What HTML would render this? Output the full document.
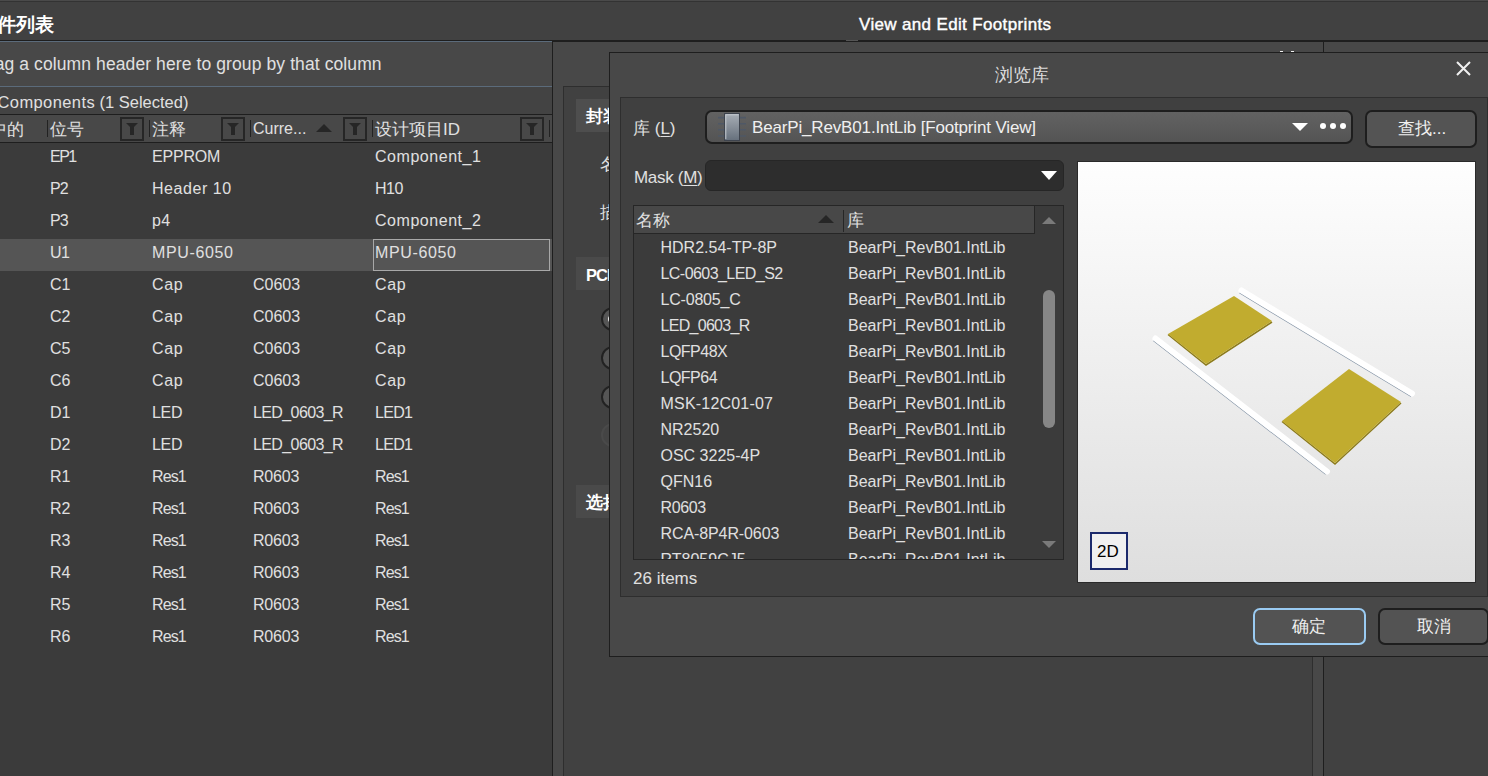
<!DOCTYPE html>
<html><head><meta charset="utf-8"><style>
html,body{margin:0;padding:0;width:1488px;height:776px;overflow:hidden;background:#414141;font-family:"Liberation Sans", sans-serif;position:relative}
u{text-decoration:underline;text-underline-offset:2px}
</style></head><body>
<div style="position:absolute;left:0px;top:0px;width:1488px;height:1px;background:#4a4a4a"></div>
<div style="position:absolute;left:0px;top:1px;width:1488px;height:1px;background:#333333"></div>
<div style="position:absolute;left:0px;top:2px;width:1488px;height:38px;background:#414141"></div>
<div style="position:absolute;left:0px;top:40px;width:1488px;height:1px;background:#1e1e1e"></div>
<div style="position:absolute;left:-3px;top:14.92px;font-size:19px;line-height:19px;color:#ffffff;font-weight:bold;white-space:pre;">件列表</div>
<div style="position:absolute;left:859px;top:15.61px;font-size:17px;line-height:17px;color:#ffffff;font-weight:normal;white-space:pre;letter-spacing:0.35px;-webkit-text-stroke:0.4px #fff">View and Edit Footprints</div>
<div style="position:absolute;left:0px;top:41px;width:552px;height:1px;background:#5b6b7b"></div>
<div style="position:absolute;left:0px;top:42px;width:552px;height:44px;background:#484848"></div>
<div style="position:absolute;left:0px;top:86px;width:552px;height:1px;background:#5b6b7b"></div>
<div style="position:absolute;left:0px;top:87px;width:552px;height:27px;background:#434343"></div>
<div style="position:absolute;left:0px;top:114px;width:552px;height:1px;background:#1e1e1e"></div>
<div style="position:absolute;left:0px;top:115px;width:552px;height:27px;background:#484848"></div>
<div style="position:absolute;left:0px;top:142px;width:552px;height:1px;background:#1e1e1e"></div>
<div style="position:absolute;left:0px;top:143px;width:552px;height:633px;background:#3b3b3b"></div>
<div style="position:absolute;left:552px;top:41px;width:1px;height:735px;background:#1e1e1e"></div>
<div style="position:absolute;left:-24px;top:56.19px;font-size:17.5px;line-height:17.5px;color:#e0e0e0;font-weight:normal;white-space:pre;letter-spacing:0.1px;">Drag a column header here to group by that column</div>
<div style="position:absolute;left:-2.5px;top:94.03px;font-size:16.5px;line-height:16.5px;color:#e0e0e0;font-weight:normal;white-space:pre;letter-spacing:0.4px;">Components</div>
<div style="position:absolute;left:99.5px;top:94.03px;font-size:16.5px;line-height:16.5px;color:#e0e0e0;font-weight:normal;white-space:pre;">(1 Selected)</div>
<div style="position:absolute;left:-10px;top:120.61px;font-size:17px;line-height:17px;color:#e0e0e0;font-weight:normal;white-space:pre;">中的</div>
<div style="position:absolute;left:47px;top:120px;width:1px;height:17px;background:#222"></div>
<div style="position:absolute;left:149px;top:120px;width:1px;height:17px;background:#222"></div>
<div style="position:absolute;left:250px;top:120px;width:1px;height:17px;background:#222"></div>
<div style="position:absolute;left:372px;top:120px;width:1px;height:17px;background:#222"></div>
<div style="position:absolute;left:549px;top:120px;width:1px;height:17px;background:#222"></div>
<div style="position:absolute;left:50px;top:120.61px;font-size:17px;line-height:17px;color:#e0e0e0;font-weight:normal;white-space:pre;">位号</div>
<div style="position:absolute;left:152px;top:120.61px;font-size:17px;line-height:17px;color:#e0e0e0;font-weight:normal;white-space:pre;">注释</div>
<div style="position:absolute;left:253px;top:121.46px;font-size:16px;line-height:16px;color:#e0e0e0;font-weight:normal;white-space:pre;">Curre...</div>
<div style="position:absolute;left:375px;top:120.61px;font-size:17px;line-height:17px;color:#e0e0e0;font-weight:normal;white-space:pre;">设计项目ID</div>
<div style="position:absolute;left:120px;top:117px;width:20px;height:20px;border:2px solid #262626;background:#484848"></div>
<svg style="position:absolute;left:120px;top:117px" width="24" height="24"><path d="M6 6 H18 L14 10 V18 H10 V10 Z" fill="#262626"/></svg>
<div style="position:absolute;left:221px;top:117px;width:20px;height:20px;border:2px solid #262626;background:#484848"></div>
<svg style="position:absolute;left:221px;top:117px" width="24" height="24"><path d="M6 6 H18 L14 10 V18 H10 V10 Z" fill="#262626"/></svg>
<div style="position:absolute;left:343px;top:117px;width:20px;height:20px;border:2px solid #262626;background:#484848"></div>
<svg style="position:absolute;left:343px;top:117px" width="24" height="24"><path d="M6 6 H18 L14 10 V18 H10 V10 Z" fill="#262626"/></svg>
<div style="position:absolute;left:520px;top:117px;width:20px;height:20px;border:2px solid #262626;background:#484848"></div>
<svg style="position:absolute;left:520px;top:117px" width="24" height="24"><path d="M6 6 H18 L14 10 V18 H10 V10 Z" fill="#262626"/></svg>
<svg style="position:absolute;left:316px;top:124px" width="16" height="8"><path d="M0 8 L8 0 L16 8 Z" fill="#262626"/></svg>
<div style="position:absolute;left:50px;top:149.46px;font-size:16px;line-height:16px;color:#e0e0e0;font-weight:normal;white-space:pre;letter-spacing:-1.5px;">EP1</div>
<div style="position:absolute;left:152px;top:149.46px;font-size:16px;line-height:16px;color:#e0e0e0;font-weight:normal;white-space:pre;letter-spacing:-0.2px;">EPPROM</div>
<div style="position:absolute;left:375px;top:149.46px;font-size:16px;line-height:16px;color:#e0e0e0;font-weight:normal;white-space:pre;letter-spacing:0.54px;">Component_1</div>
<div style="position:absolute;left:50px;top:181.46px;font-size:16px;line-height:16px;color:#e0e0e0;font-weight:normal;white-space:pre;letter-spacing:-1px;">P2</div>
<div style="position:absolute;left:152px;top:181.46px;font-size:16px;line-height:16px;color:#e0e0e0;font-weight:normal;white-space:pre;letter-spacing:0.56px;">Header 10</div>
<div style="position:absolute;left:375px;top:181.46px;font-size:16px;line-height:16px;color:#e0e0e0;font-weight:normal;white-space:pre;letter-spacing:-0.5px;">H10</div>
<div style="position:absolute;left:50px;top:213.46px;font-size:16px;line-height:16px;color:#e0e0e0;font-weight:normal;white-space:pre;letter-spacing:-1px;">P3</div>
<div style="position:absolute;left:152px;top:213.46px;font-size:16px;line-height:16px;color:#e0e0e0;font-weight:normal;white-space:pre;letter-spacing:0.3px;">p4</div>
<div style="position:absolute;left:375px;top:213.46px;font-size:16px;line-height:16px;color:#e0e0e0;font-weight:normal;white-space:pre;letter-spacing:0.54px;">Component_2</div>
<div style="position:absolute;left:0px;top:239px;width:552px;height:32px;background:#555555"></div>
<div style="position:absolute;left:373px;top:239px;width:175px;height:30px;border:1px solid #a8a8a8"></div>
<div style="position:absolute;left:50px;top:245.46px;font-size:16px;line-height:16px;color:#e0e0e0;font-weight:normal;white-space:pre;letter-spacing:-0.5px;">U1</div>
<div style="position:absolute;left:152px;top:245.46px;font-size:16px;line-height:16px;color:#e0e0e0;font-weight:normal;white-space:pre;letter-spacing:0.63px;">MPU-6050</div>
<div style="position:absolute;left:375px;top:245.46px;font-size:16px;line-height:16px;color:#e0e0e0;font-weight:normal;white-space:pre;letter-spacing:0.63px;">MPU-6050</div>
<div style="position:absolute;left:50px;top:277.46px;font-size:16px;line-height:16px;color:#e0e0e0;font-weight:normal;white-space:pre;">C1</div>
<div style="position:absolute;left:152px;top:277.46px;font-size:16px;line-height:16px;color:#e0e0e0;font-weight:normal;white-space:pre;letter-spacing:0.7px;">Cap</div>
<div style="position:absolute;left:253px;top:277.46px;font-size:16px;line-height:16px;color:#e0e0e0;font-weight:normal;white-space:pre;">C0603</div>
<div style="position:absolute;left:375px;top:277.46px;font-size:16px;line-height:16px;color:#e0e0e0;font-weight:normal;white-space:pre;letter-spacing:0.7px;">Cap</div>
<div style="position:absolute;left:50px;top:309.46px;font-size:16px;line-height:16px;color:#e0e0e0;font-weight:normal;white-space:pre;">C2</div>
<div style="position:absolute;left:152px;top:309.46px;font-size:16px;line-height:16px;color:#e0e0e0;font-weight:normal;white-space:pre;letter-spacing:0.7px;">Cap</div>
<div style="position:absolute;left:253px;top:309.46px;font-size:16px;line-height:16px;color:#e0e0e0;font-weight:normal;white-space:pre;">C0603</div>
<div style="position:absolute;left:375px;top:309.46px;font-size:16px;line-height:16px;color:#e0e0e0;font-weight:normal;white-space:pre;letter-spacing:0.7px;">Cap</div>
<div style="position:absolute;left:50px;top:341.46px;font-size:16px;line-height:16px;color:#e0e0e0;font-weight:normal;white-space:pre;">C5</div>
<div style="position:absolute;left:152px;top:341.46px;font-size:16px;line-height:16px;color:#e0e0e0;font-weight:normal;white-space:pre;letter-spacing:0.7px;">Cap</div>
<div style="position:absolute;left:253px;top:341.46px;font-size:16px;line-height:16px;color:#e0e0e0;font-weight:normal;white-space:pre;">C0603</div>
<div style="position:absolute;left:375px;top:341.46px;font-size:16px;line-height:16px;color:#e0e0e0;font-weight:normal;white-space:pre;letter-spacing:0.7px;">Cap</div>
<div style="position:absolute;left:50px;top:373.46px;font-size:16px;line-height:16px;color:#e0e0e0;font-weight:normal;white-space:pre;">C6</div>
<div style="position:absolute;left:152px;top:373.46px;font-size:16px;line-height:16px;color:#e0e0e0;font-weight:normal;white-space:pre;letter-spacing:0.7px;">Cap</div>
<div style="position:absolute;left:253px;top:373.46px;font-size:16px;line-height:16px;color:#e0e0e0;font-weight:normal;white-space:pre;">C0603</div>
<div style="position:absolute;left:375px;top:373.46px;font-size:16px;line-height:16px;color:#e0e0e0;font-weight:normal;white-space:pre;letter-spacing:0.7px;">Cap</div>
<div style="position:absolute;left:50px;top:405.46px;font-size:16px;line-height:16px;color:#e0e0e0;font-weight:normal;white-space:pre;">D1</div>
<div style="position:absolute;left:152px;top:405.46px;font-size:16px;line-height:16px;color:#e0e0e0;font-weight:normal;white-space:pre;letter-spacing:-0.3px;">LED</div>
<div style="position:absolute;left:253px;top:405.46px;font-size:16px;line-height:16px;color:#e0e0e0;font-weight:normal;white-space:pre;letter-spacing:-0.6px;">LED_0603_R</div>
<div style="position:absolute;left:375px;top:405.46px;font-size:16px;line-height:16px;color:#e0e0e0;font-weight:normal;white-space:pre;letter-spacing:-0.7px;">LED1</div>
<div style="position:absolute;left:50px;top:437.46px;font-size:16px;line-height:16px;color:#e0e0e0;font-weight:normal;white-space:pre;">D2</div>
<div style="position:absolute;left:152px;top:437.46px;font-size:16px;line-height:16px;color:#e0e0e0;font-weight:normal;white-space:pre;letter-spacing:-0.3px;">LED</div>
<div style="position:absolute;left:253px;top:437.46px;font-size:16px;line-height:16px;color:#e0e0e0;font-weight:normal;white-space:pre;letter-spacing:-0.6px;">LED_0603_R</div>
<div style="position:absolute;left:375px;top:437.46px;font-size:16px;line-height:16px;color:#e0e0e0;font-weight:normal;white-space:pre;letter-spacing:-0.7px;">LED1</div>
<div style="position:absolute;left:50px;top:469.46px;font-size:16px;line-height:16px;color:#e0e0e0;font-weight:normal;white-space:pre;">R1</div>
<div style="position:absolute;left:152px;top:469.46px;font-size:16px;line-height:16px;color:#e0e0e0;font-weight:normal;white-space:pre;letter-spacing:-0.9px;">Res1</div>
<div style="position:absolute;left:253px;top:469.46px;font-size:16px;line-height:16px;color:#e0e0e0;font-weight:normal;white-space:pre;letter-spacing:-0.2px;">R0603</div>
<div style="position:absolute;left:375px;top:469.46px;font-size:16px;line-height:16px;color:#e0e0e0;font-weight:normal;white-space:pre;letter-spacing:-0.9px;">Res1</div>
<div style="position:absolute;left:50px;top:501.46px;font-size:16px;line-height:16px;color:#e0e0e0;font-weight:normal;white-space:pre;">R2</div>
<div style="position:absolute;left:152px;top:501.46px;font-size:16px;line-height:16px;color:#e0e0e0;font-weight:normal;white-space:pre;letter-spacing:-0.9px;">Res1</div>
<div style="position:absolute;left:253px;top:501.46px;font-size:16px;line-height:16px;color:#e0e0e0;font-weight:normal;white-space:pre;letter-spacing:-0.2px;">R0603</div>
<div style="position:absolute;left:375px;top:501.46px;font-size:16px;line-height:16px;color:#e0e0e0;font-weight:normal;white-space:pre;letter-spacing:-0.9px;">Res1</div>
<div style="position:absolute;left:50px;top:533.46px;font-size:16px;line-height:16px;color:#e0e0e0;font-weight:normal;white-space:pre;">R3</div>
<div style="position:absolute;left:152px;top:533.46px;font-size:16px;line-height:16px;color:#e0e0e0;font-weight:normal;white-space:pre;letter-spacing:-0.9px;">Res1</div>
<div style="position:absolute;left:253px;top:533.46px;font-size:16px;line-height:16px;color:#e0e0e0;font-weight:normal;white-space:pre;letter-spacing:-0.2px;">R0603</div>
<div style="position:absolute;left:375px;top:533.46px;font-size:16px;line-height:16px;color:#e0e0e0;font-weight:normal;white-space:pre;letter-spacing:-0.9px;">Res1</div>
<div style="position:absolute;left:50px;top:565.46px;font-size:16px;line-height:16px;color:#e0e0e0;font-weight:normal;white-space:pre;">R4</div>
<div style="position:absolute;left:152px;top:565.46px;font-size:16px;line-height:16px;color:#e0e0e0;font-weight:normal;white-space:pre;letter-spacing:-0.9px;">Res1</div>
<div style="position:absolute;left:253px;top:565.46px;font-size:16px;line-height:16px;color:#e0e0e0;font-weight:normal;white-space:pre;letter-spacing:-0.2px;">R0603</div>
<div style="position:absolute;left:375px;top:565.46px;font-size:16px;line-height:16px;color:#e0e0e0;font-weight:normal;white-space:pre;letter-spacing:-0.9px;">Res1</div>
<div style="position:absolute;left:50px;top:597.46px;font-size:16px;line-height:16px;color:#e0e0e0;font-weight:normal;white-space:pre;">R5</div>
<div style="position:absolute;left:152px;top:597.46px;font-size:16px;line-height:16px;color:#e0e0e0;font-weight:normal;white-space:pre;letter-spacing:-0.9px;">Res1</div>
<div style="position:absolute;left:253px;top:597.46px;font-size:16px;line-height:16px;color:#e0e0e0;font-weight:normal;white-space:pre;letter-spacing:-0.2px;">R0603</div>
<div style="position:absolute;left:375px;top:597.46px;font-size:16px;line-height:16px;color:#e0e0e0;font-weight:normal;white-space:pre;letter-spacing:-0.9px;">Res1</div>
<div style="position:absolute;left:50px;top:629.46px;font-size:16px;line-height:16px;color:#e0e0e0;font-weight:normal;white-space:pre;">R6</div>
<div style="position:absolute;left:152px;top:629.46px;font-size:16px;line-height:16px;color:#e0e0e0;font-weight:normal;white-space:pre;letter-spacing:-0.9px;">Res1</div>
<div style="position:absolute;left:253px;top:629.46px;font-size:16px;line-height:16px;color:#e0e0e0;font-weight:normal;white-space:pre;letter-spacing:-0.2px;">R0603</div>
<div style="position:absolute;left:375px;top:629.46px;font-size:16px;line-height:16px;color:#e0e0e0;font-weight:normal;white-space:pre;letter-spacing:-0.9px;">Res1</div>
<div style="position:absolute;left:553px;top:41px;width:770px;height:735px;background:#484848"></div>
<div style="position:absolute;left:563px;top:86px;width:750px;height:690px;background:#414141;border-left:1px solid #2e2e2e;border-top:1px solid #2e2e2e;border-right:1px solid #2e2e2e;box-sizing:border-box"></div>
<div style="position:absolute;left:1323px;top:41px;width:1px;height:735px;background:#1e1e1e"></div>
<div style="position:absolute;left:1324px;top:41px;width:164px;height:735px;background:#414141"></div>
<div style="position:absolute;left:1324px;top:41px;width:164px;height:11px;background:#484848"></div>
<div style="position:absolute;left:553px;top:41px;width:935px;height:1px;background:#1e1e1e"></div>
<div style="position:absolute;left:846px;top:40px;width:12px;height:1px;background:#555555"></div>
<div style="position:absolute;left:1280px;top:51px;width:3px;height:1px;background:#f0f0f0"></div>
<div style="position:absolute;left:1291px;top:51px;width:3px;height:1px;background:#f0f0f0"></div>
<div style="position:absolute;left:576px;top:99px;width:40px;height:33px;background:#4e4e4e"></div>
<div style="position:absolute;left:586px;top:107.61px;font-size:17px;line-height:17px;color:#ffffff;font-weight:bold;white-space:pre;">封装</div>
<div style="position:absolute;left:600px;top:155.61px;font-size:17px;line-height:17px;color:#e0e0e0;font-weight:normal;white-space:pre;">名称</div>
<div style="position:absolute;left:600px;top:203.61px;font-size:17px;line-height:17px;color:#e0e0e0;font-weight:normal;white-space:pre;">描述</div>
<div style="position:absolute;left:576px;top:257px;width:40px;height:33px;background:#4a4a4a"></div>
<div style="position:absolute;left:586px;top:267.03px;font-size:16.5px;line-height:16.5px;color:#ffffff;font-weight:bold;white-space:pre;letter-spacing:-1px;">PCB</div>
<div style="position:absolute;left:601px;top:307px;width:20px;height:20px;border-radius:50%;border:2px solid #222;background:#555"></div>
<div style="position:absolute;left:601px;top:346px;width:20px;height:20px;border-radius:50%;border:2px solid #222;background:#555"></div>
<div style="position:absolute;left:601px;top:385px;width:20px;height:20px;border-radius:50%;border:2px solid #222;background:#555"></div>
<div style="position:absolute;left:608px;top:314px;width:10px;height:10px;border-radius:50%;background:#f4f4f4"></div>
<div style="position:absolute;left:601px;top:423px;width:20px;height:20px;border-radius:50%;border:2px solid #4a4a4a;background:#444"></div>
<div style="position:absolute;left:576px;top:485px;width:40px;height:33px;background:#4a4a4a"></div>
<div style="position:absolute;left:586px;top:493.61px;font-size:17px;line-height:17px;color:#ffffff;font-weight:bold;white-space:pre;">选择</div>
<div style="position:absolute;left:609px;top:52px;width:900px;height:605px;background:#484848;border:1px solid #1e1e1e;box-sizing:border-box"></div>
<div style="position:absolute;left:995px;top:65.76px;font-size:18px;line-height:18px;color:#dcdcdc;font-weight:normal;white-space:pre;">浏览库</div>
<svg style="position:absolute;left:1456px;top:61px" width="15" height="15"><path d="M1 1 L14 14 M14 1 L1 14" stroke="#f0f0f0" stroke-width="2"/></svg>
<div style="position:absolute;left:620px;top:97px;width:868px;height:500px;background:#404040;border:1px solid #2e2e2e;box-sizing:border-box"></div>
<div style="position:absolute;left:633px;top:119.61px;font-size:17px;line-height:17px;color:#e0e0e0;font-weight:normal;white-space:pre;">库 (<u>L</u>)</div>
<div style="position:absolute;left:705px;top:110px;width:648px;height:34px;box-sizing:border-box;border:2px solid #1e1e1e;border-radius:7px;background:linear-gradient(#626262,#545454)"></div>
<svg style="position:absolute;left:717px;top:113px" width="30" height="28"><g stroke="#4f5866" stroke-width="1.6"><path d="M1 4.6H29M1 10.7H29M1 16.8H29M1 23H29"/></g><rect x="7.5" y="0.5" width="15" height="27" fill="url(#cg)" stroke="#3e444e"/><path d="M8.8 26 V1.8 H21.5" stroke="#c4c8ce" stroke-width="1" fill="none"/><defs><linearGradient id="cg" x1="0" y1="0" x2="0" y2="1"><stop offset="0" stop-color="#a8aeb6"/><stop offset="1" stop-color="#66707c"/></linearGradient></defs></svg>
<div style="position:absolute;left:752px;top:118.61px;font-size:17px;line-height:17px;color:#f0f0f0;font-weight:normal;white-space:pre;letter-spacing:-0.16px;">BearPi_RevB01.IntLib [Footprint View]</div>
<svg style="position:absolute;left:1292px;top:123px" width="16" height="8"><path d="M0 0 H16 L8 8 Z" fill="#ffffff"/></svg>
<div style="position:absolute;left:1320px;top:123px;width:6px;height:6px;border-radius:50%;background:#fff"></div>
<div style="position:absolute;left:1330px;top:123px;width:6px;height:6px;border-radius:50%;background:#fff"></div>
<div style="position:absolute;left:1340px;top:123px;width:6px;height:6px;border-radius:50%;background:#fff"></div>
<div style="position:absolute;left:1365px;top:110px;width:112px;height:38px;box-sizing:border-box;border:2px solid #1e1e1e;border-radius:7px;background:#545454"></div>
<div style="position:absolute;left:1398px;top:119.61px;font-size:17px;line-height:17px;color:#f0f0f0;font-weight:normal;white-space:pre;">查找...</div>
<div style="position:absolute;left:634px;top:168.61px;font-size:17px;line-height:17px;color:#e0e0e0;font-weight:normal;white-space:pre;letter-spacing:-0.3px;">Mask (<u>M</u>)</div>
<div style="position:absolute;left:705px;top:160px;width:359px;height:31px;box-sizing:border-box;border:1px solid #262626;border-radius:6px;background:#2d2d2d"></div>
<svg style="position:absolute;left:1041px;top:171px" width="16" height="9"><path d="M0 0 H16 L8 9 Z" fill="#ffffff"/></svg>
<div style="position:absolute;left:633px;top:205px;width:431px;height:355px;background:#3b3b3b;border:1px solid #262626;box-sizing:border-box"></div>
<div style="position:absolute;left:634px;top:206px;width:401px;height:27px;background:#484848;border-right:1px solid #262626;box-sizing:border-box"></div>
<div style="position:absolute;left:634px;top:233px;width:401px;height:1px;background:#262626"></div>
<div style="position:absolute;left:1035px;top:206px;width:28px;height:353px;background:#3b3b3b"></div>
<div style="position:absolute;left:636px;top:211.61px;font-size:17px;line-height:17px;color:#e0e0e0;font-weight:normal;white-space:pre;">名称</div>
<svg style="position:absolute;left:818px;top:215px" width="16" height="8"><path d="M0 8 L8 0 L16 8 Z" fill="#262626"/></svg>
<div style="position:absolute;left:843px;top:210px;width:1px;height:22px;background:#262626"></div>
<div style="position:absolute;left:847px;top:211.61px;font-size:17px;line-height:17px;color:#e0e0e0;font-weight:normal;white-space:pre;">库</div>
<svg style="position:absolute;left:1042px;top:217px" width="14" height="7"><path d="M0 7 L7 0 L14 7 Z" fill="#7a7a7a"/></svg>
<svg style="position:absolute;left:1042px;top:541px" width="14" height="7"><path d="M0 0 H14 L7 7 Z" fill="#7a7a7a"/></svg>
<div style="position:absolute;left:1043px;top:290px;width:12px;height:138px;border-radius:6px;background:#868686"></div>
<div style="position:absolute;left:634px;top:234px;width:401px;height:325px;overflow:hidden">
<div style="position:absolute;left:26.5px;top:6.46px;font-size:16px;line-height:16px;color:#e0e0e0;white-space:pre;letter-spacing:0px">HDR2.54-TP-8P</div>
<div style="position:absolute;left:214px;top:6.46px;font-size:16px;line-height:16px;color:#e0e0e0;white-space:pre">BearPi_RevB01.IntLib</div>
<div style="position:absolute;left:26.5px;top:32.46px;font-size:16px;line-height:16px;color:#e0e0e0;white-space:pre;letter-spacing:-0.55px">LC-0603_LED_S2</div>
<div style="position:absolute;left:214px;top:32.46px;font-size:16px;line-height:16px;color:#e0e0e0;white-space:pre">BearPi_RevB01.IntLib</div>
<div style="position:absolute;left:26.5px;top:58.46px;font-size:16px;line-height:16px;color:#e0e0e0;white-space:pre;letter-spacing:-0.2px">LC-0805_C</div>
<div style="position:absolute;left:214px;top:58.46px;font-size:16px;line-height:16px;color:#e0e0e0;white-space:pre">BearPi_RevB01.IntLib</div>
<div style="position:absolute;left:26.5px;top:84.46px;font-size:16px;line-height:16px;color:#e0e0e0;white-space:pre;letter-spacing:-0.7px">LED_0603_R</div>
<div style="position:absolute;left:214px;top:84.46px;font-size:16px;line-height:16px;color:#e0e0e0;white-space:pre">BearPi_RevB01.IntLib</div>
<div style="position:absolute;left:26.5px;top:110.46px;font-size:16px;line-height:16px;color:#e0e0e0;white-space:pre;letter-spacing:-0.5px">LQFP48X</div>
<div style="position:absolute;left:214px;top:110.46px;font-size:16px;line-height:16px;color:#e0e0e0;white-space:pre">BearPi_RevB01.IntLib</div>
<div style="position:absolute;left:26.5px;top:136.46px;font-size:16px;line-height:16px;color:#e0e0e0;white-space:pre;letter-spacing:-0.5px">LQFP64</div>
<div style="position:absolute;left:214px;top:136.46px;font-size:16px;line-height:16px;color:#e0e0e0;white-space:pre">BearPi_RevB01.IntLib</div>
<div style="position:absolute;left:26.5px;top:162.46px;font-size:16px;line-height:16px;color:#e0e0e0;white-space:pre;letter-spacing:0.2px">MSK-12C01-07</div>
<div style="position:absolute;left:214px;top:162.46px;font-size:16px;line-height:16px;color:#e0e0e0;white-space:pre">BearPi_RevB01.IntLib</div>
<div style="position:absolute;left:26.5px;top:188.46px;font-size:16px;line-height:16px;color:#e0e0e0;white-space:pre;letter-spacing:0px">NR2520</div>
<div style="position:absolute;left:214px;top:188.46px;font-size:16px;line-height:16px;color:#e0e0e0;white-space:pre">BearPi_RevB01.IntLib</div>
<div style="position:absolute;left:26.5px;top:214.46px;font-size:16px;line-height:16px;color:#e0e0e0;white-space:pre;letter-spacing:0px">OSC 3225-4P</div>
<div style="position:absolute;left:214px;top:214.46px;font-size:16px;line-height:16px;color:#e0e0e0;white-space:pre">BearPi_RevB01.IntLib</div>
<div style="position:absolute;left:26.5px;top:240.46px;font-size:16px;line-height:16px;color:#e0e0e0;white-space:pre;letter-spacing:0px">QFN16</div>
<div style="position:absolute;left:214px;top:240.46px;font-size:16px;line-height:16px;color:#e0e0e0;white-space:pre">BearPi_RevB01.IntLib</div>
<div style="position:absolute;left:26.5px;top:266.46px;font-size:16px;line-height:16px;color:#e0e0e0;white-space:pre;letter-spacing:-0.35px">R0603</div>
<div style="position:absolute;left:214px;top:266.46px;font-size:16px;line-height:16px;color:#e0e0e0;white-space:pre">BearPi_RevB01.IntLib</div>
<div style="position:absolute;left:26.5px;top:292.46px;font-size:16px;line-height:16px;color:#e0e0e0;white-space:pre;letter-spacing:-0.1px">RCA-8P4R-0603</div>
<div style="position:absolute;left:214px;top:292.46px;font-size:16px;line-height:16px;color:#e0e0e0;white-space:pre">BearPi_RevB01.IntLib</div>
<div style="position:absolute;left:26.5px;top:318.46px;font-size:16px;line-height:16px;color:#e0e0e0;white-space:pre;letter-spacing:0px">RT8059CJ5</div>
<div style="position:absolute;left:214px;top:318.46px;font-size:16px;line-height:16px;color:#e0e0e0;white-space:pre">BearPi_RevB01.IntLib</div>
</div>
<div style="position:absolute;left:633px;top:569.61px;font-size:17px;line-height:17px;color:#e0e0e0;font-weight:normal;white-space:pre;">26 items</div>
<div style="position:absolute;left:1077px;top:161px;width:399px;height:422px;box-sizing:border-box;border:1px solid #2a2a2a;background:linear-gradient(#fefefe,#dedede)"></div>
<svg style="position:absolute;left:1077px;top:161px" width="398" height="421">
<g transform="translate(-1077,-161)">
<path d="M1239.9 293.1 L1410.4 396.1" stroke="#8494a6" stroke-width="1.2" stroke-linecap="round"/>
<path d="M1241.5 290.5 L1412 393.5" stroke="#ffffff" stroke-width="6" stroke-linecap="round"/>
<path d="M1153.7 340.9 L1325.2 473.9" stroke="#8494a6" stroke-width="1.2" stroke-linecap="round"/>
<path d="M1155.5 338.5 L1327 471.5" stroke="#ffffff" stroke-width="6" stroke-linecap="round"/>
<path d="M1168 334.5 L1206 365 L1272 322" stroke="#8c7b1c" stroke-width="1.5" fill="none"/>
<path d="M1234 296 L1272 321 L1206 364 L1168 334 Z" fill="#c1ac2f"/>
<path d="M1282 421.5 L1335 464 L1401 403" stroke="#8c7b1c" stroke-width="1.5" fill="none"/>
<path d="M1349 369 L1401 402 L1335 463 L1282 421 Z" fill="#c1ac2f"/>
</g></svg>
<div style="position:absolute;left:1090px;top:532px;width:38px;height:38px;box-sizing:border-box;border:2px solid #1c2a6c;background:#f0f0f0"></div>
<div style="position:absolute;left:1097px;top:542.61px;font-size:17px;line-height:17px;color:#000000;font-weight:normal;white-space:pre;">2D</div>
<div style="position:absolute;left:1253px;top:608px;width:113px;height:37px;box-sizing:border-box;border:2px solid #9acbf2;border-radius:7px;background:#535353"></div>
<div style="position:absolute;left:1292px;top:617.61px;font-size:17px;line-height:17px;color:#f0f0f0;font-weight:normal;white-space:pre;">确定</div>
<div style="position:absolute;left:1378px;top:608px;width:111px;height:37px;box-sizing:border-box;border:2px solid #1e1e1e;border-radius:7px;background:#535353"></div>
<div style="position:absolute;left:1417px;top:617.61px;font-size:17px;line-height:17px;color:#f0f0f0;font-weight:normal;white-space:pre;">取消</div>
</body></html>
